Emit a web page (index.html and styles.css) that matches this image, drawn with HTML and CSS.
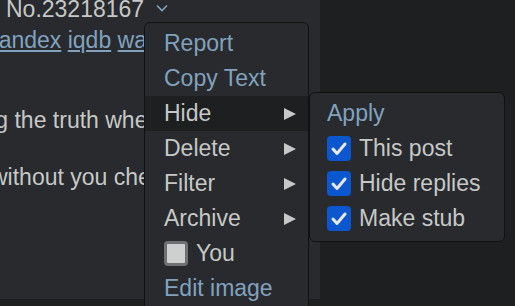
FILE: index.html
```html
<!DOCTYPE html>
<html lang="en">
<head>
    <meta charset="UTF-8">
    <meta name="viewport" content="width=device-width, initial-scale=1.0">
    <title>Post menu</title>
    <link rel="stylesheet" href="styles.css">
</head>
<body>
    <div class="page">
        <div class="post">
            <div class="post-head">
                <span class="post-no">No.23218167</span>
                <svg class="chevron" width="12" height="8" viewBox="0 0 12 8">
                    <polyline points="1,1.5 6,6.5 11,1.5" fill="none" stroke="#81a2be" stroke-width="1.6"/>
                </svg>
            </div>
            <div class="post-links">
                <a href="#">Yandex</a> <a href="#">iqdb</a> <a href="#">wait</a>
            </div>
            <p class="post-line line-truth">telling the truth when</p>
            <p class="post-line line-without">without you checking</p>
        </div>

        <div class="menu">
            <div class="menu-item link">Report</div>
            <div class="menu-item link">Copy Text</div>
            <div class="menu-item has-sub focused">
                <span>Hide</span>
                <span class="arrow"></span>
                <div class="submenu">
                    <div class="menu-item link">Apply</div>
                    <div class="menu-item"><span class="check on"><svg width="24" height="25" viewBox="0 0 24 25"><polyline points="6,13 10,17.5 18,8" fill="none" stroke="#e8e8e8" stroke-width="3" stroke-linecap="round" stroke-linejoin="round"/></svg></span>This post</div>
                    <div class="menu-item"><span class="check on"><svg width="24" height="25" viewBox="0 0 24 25"><polyline points="6,13 10,17.5 18,8" fill="none" stroke="#e8e8e8" stroke-width="3" stroke-linecap="round" stroke-linejoin="round"/></svg></span>Hide replies</div>
                    <div class="menu-item"><span class="check on"><svg width="24" height="25" viewBox="0 0 24 25"><polyline points="6,13 10,17.5 18,8" fill="none" stroke="#e8e8e8" stroke-width="3" stroke-linecap="round" stroke-linejoin="round"/></svg></span>Make stub</div>
                </div>
            </div>
            <div class="menu-item has-sub"><span>Delete</span><span class="arrow"></span></div>
            <div class="menu-item has-sub"><span>Filter</span><span class="arrow"></span></div>
            <div class="menu-item has-sub"><span>Archive</span><span class="arrow"></span></div>
            <div class="menu-item"><span class="check off"></span>You</div>
            <div class="menu-item link">Edit image</div>
        </div>
    </div>
</body>
</html>
```

FILE: styles.css
```css
* {
    margin: 0;
    padding: 0;
    box-sizing: border-box;
}

body {
    background: #1d1f21;
    color: #c5c8c6;
    font-family: "Liberation Sans", Arial, sans-serif;
    font-size: 23px;
    height: 306px;
    overflow: hidden;
}

.page {
    position: relative;
    height: 306px;
}

.post {
    width: 320px;
    height: 299px;
    background: #282a2e;
    overflow: hidden;
    white-space: nowrap;
}

.post-head {
    display: flex;
    align-items: center;
    gap: 12px;
    line-height: 28px;
    margin-top: -5px;
    padding-left: 6px;
}

.chevron {
    margin-top: -2px;
}

.post-links {
    line-height: 28px;
    margin-top: 3px;
    margin-left: -15px;
}

.post-links a {
    color: #81a2be;
    text-decoration: underline;
}

/* the rest of each line sits under the dropdown */
.post-line {
    line-height: 28px;
    overflow: hidden;
}

.line-truth {
    width: 196px;
    margin-top: 52px;
    margin-left: -52px;
}

.line-without {
    width: 153px;
    margin-top: 29px;
    margin-left: -9px;
}

/* dropdown */

.menu {
    position: absolute;
    left: 144px;
    top: 22px;
    width: 165px;
    padding-top: 3px;
    background: #282a2e;
    border: 1px solid #111;
    border-radius: 6px 6px 0 0;
}

.menu-item {
    position: relative;
    display: flex;
    align-items: center;
    height: 35px;
    padding-left: 19px;
    white-space: nowrap;
}

.menu-item.link {
    color: #81a2be;
}

.menu-item.has-sub {
    justify-content: space-between;
    padding-right: 12px;
}

.menu-item.focused {
    background: #1d1f21;
}

.arrow {
    width: 0;
    height: 0;
    border-top: 6px solid transparent;
    border-bottom: 6px solid transparent;
    border-left: 12px solid #c5c8c6;
}

.submenu {
    position: absolute;
    left: calc(100% + 1px);
    top: -4px;
    width: 196px;
    padding: 3px 0 5px;
    background: #282a2e;
    border: 1px solid #111;
    border-radius: 6px;
}

.submenu .menu-item {
    padding-left: 17px;
}

.check {
    display: inline-block;
    flex-shrink: 0;
    width: 24px;
    height: 25px;
    margin-right: 8px;
    border-radius: 4px;
}

.check.on {
    background: #0b57d0;
}

.check.on svg {
    display: block;
}

.check.off {
    background: #cfcfcf;
    border: 3px solid #6f6f74;
}
```
